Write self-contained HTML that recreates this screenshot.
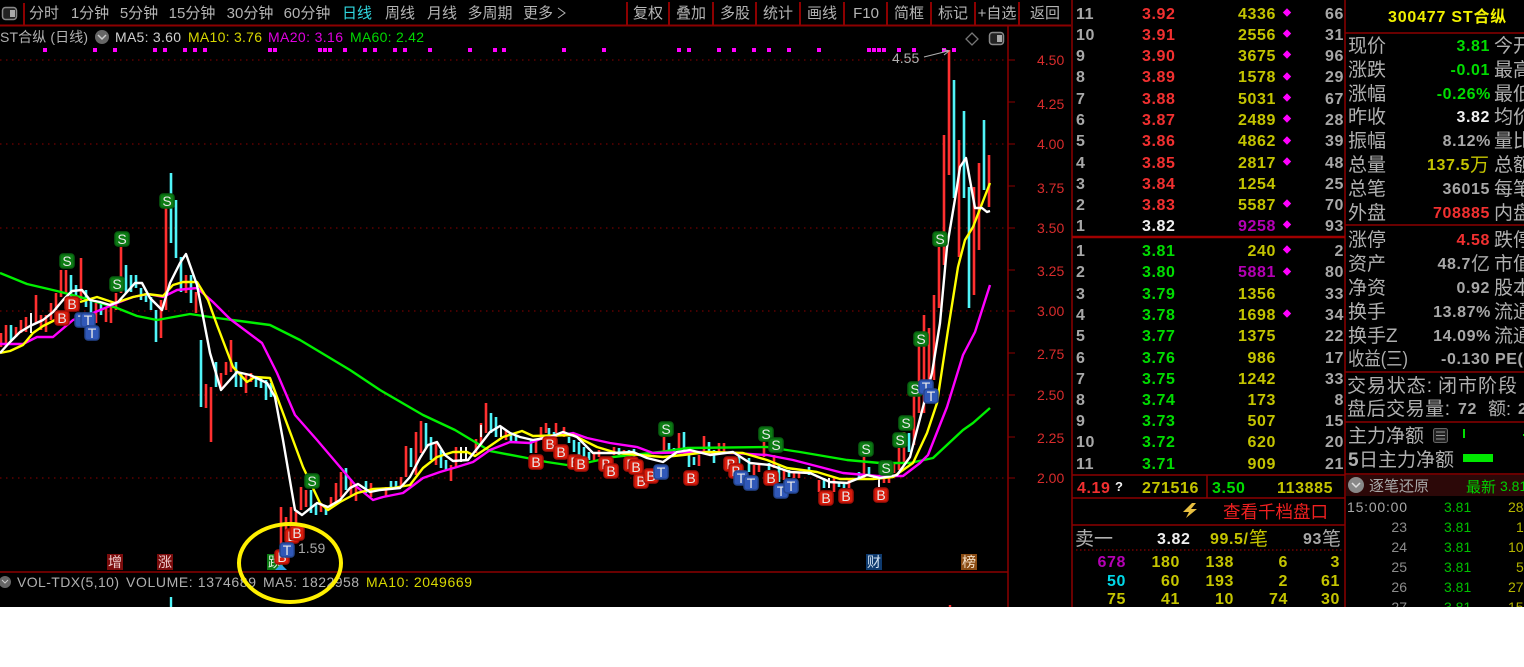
<!DOCTYPE html>
<html lang="zh"><head><meta charset="utf-8"><title>ST合纵</title>
<style>
html,body{margin:0;padding:0;background:#fff;width:1524px;height:667px;overflow:hidden}
svg{display:block;position:absolute;left:0;top:0;background:#000}
text{font-family:"Liberation Sans","Noto Sans CJK SC",sans-serif}
.tb{font-size:15px;fill:#b4b4b4;text-anchor:middle}
.h{font-size:14px}
.ax{font-size:14px;fill:#d82c2c}
.ob{font-size:16px;font-weight:bold;letter-spacing:.6px}
.e{text-anchor:end}
.g{fill:#a8a8a8}.r{fill:#f23030}.y{fill:#c4c400}.m{fill:#b400b4}.v{fill:#00dc00}.w{fill:#f0f0f0}.c{fill:#00d8e8}
.l{font-size:19px;fill:#b0b0b0}
.mk{font-size:14px;fill:#e8e8e8;text-anchor:middle}
.rb{fill:#d81c0c;stroke:#a81008}.sb{fill:#0c7c14;stroke:#086010}.tt{fill:#3058b8;stroke:#244690}
.t{font-size:14px}
</style></head><body>
<svg width="1524" height="607" viewBox="0 0 1524 607" xmlns="http://www.w3.org/2000/svg">
<!-- frame -->
<g stroke="#8c0000" fill="none">
<path stroke-width="2" d="M0 25.5H1071M24 3V25M627 2V25M669 2V25M713 2V25M756 2V25M800 2V25M844 2V25M887 2V25M931 2V25M975 2V25M1019 2V25"/>
<path stroke-width="1.5" d="M1008 25V607M1072 0V607M1345 0V607M0 572H1008"/>
<path stroke-width="2.5" stroke="#a00000" d="M1072 237H1345"/>
<path stroke-width="1.5" d="M1072 475H1345M1072 498H1345M1072 525H1345M1207 475V498M1345 33H1524M1345 225H1524M1345 372H1524M1345 422H1524M1345 474H1524"/>
<path d="M1008 60H1015M1008 102H1015M1008 144H1015M1008 186H1015M1008 228H1015M1008 270H1015M1008 311H1015M1008 353H1015M1008 395H1015M1008 437H1015M1008 478H1015"/>
<path stroke-dasharray="1.5 4.5" d="M0 60H1008M0 144H1008M0 228H1008M0 311H1008M0 395H1008M0 478H1008"/>
<path stroke="#b00000" stroke-dasharray="1.5 2.5" d="M1076 550H1342"/>
</g>
<!-- toolbar -->
<rect x="2.5" y="7.5" width="14" height="12" rx="3" fill="#222" stroke="#888" stroke-width="1.5"/><rect x="10" y="10" width="5" height="7" fill="#aaa"/>
<g class="tb">
<text x="44" y="18">分时</text><text x="90" y="18">1分钟</text><text x="139" y="18">5分钟</text><text x="192" y="18">15分钟</text><text x="250" y="18">30分钟</text><text x="307" y="18">60分钟</text>
<text x="357" y="18" style="fill:#30d8e0">日线</text><text x="400" y="18">周线</text><text x="442" y="18">月线</text><text x="490" y="18">多周期</text><text x="538" y="18">更多</text>
<text x="648" y="18">复权</text><text x="691" y="18">叠加</text><text x="735" y="18">多股</text><text x="778" y="18">统计</text><text x="822" y="18">画线</text><text x="866" y="18">F10</text><text x="909" y="18">简框</text><text x="953" y="18">标记</text><text x="997" y="18">+自选</text><text x="1045" y="18">返回</text>
</g>
<path d="M558 8L565 13L558 18" stroke="#b4b4b4" fill="none"/>
<!-- header -->
<text x="0" y="42" class="h" fill="#b0b0b0" textLength="88">ST合纵 (日线)</text>
<circle cx="102" cy="37" r="7" fill="#666"/><path d="M98 35L102 39L106 35" stroke="#ccc" stroke-width="1.5" fill="none"/>
<text x="115" y="42" class="h" fill="#d0d0d0" textLength="66">MA5: 3.60</text>
<text x="188" y="42" class="h" fill="#d8d800" textLength="74">MA10: 3.76</text>
<text x="268" y="42" class="h" fill="#e000e0" textLength="75">MA20: 3.16</text>
<text x="350" y="42" class="h" fill="#00d800" textLength="74">MA60: 2.42</text>
<path d="M972 33L978 39L972 45L966 39Z" fill="none" stroke="#777" stroke-width="1.3"/>
<rect x="989.5" y="32.5" width="14" height="12" rx="3" fill="#222" stroke="#888" stroke-width="1.5"/><rect x="997" y="35" width="5" height="7" fill="#aaa"/>
<path stroke="#ff00ff" stroke-width="4" fill="none" d="M43 50h4M93 50h4M113 50h4M153 50h4M163 50h4M183 50h4M193 50h4M203 50h4M268 50h4M273 50h4M318 50h4M323 50h4M328 50h4M343 50h4M363 50h4M373 50h4M393 50h4M403 50h4M428 50h4M468 50h4M493 50h4M502 50h4M562 50h4M602 50h4M677 50h4M687 50h4M717 50h4M732 50h4M752 50h4M767 50h4M787 50h4M817 50h4M867 50h4M872 50h4M877 50h4M882 50h4M897 50h4M912 50h4M942 50h4M952 50h4"/>
<!-- axis -->
<g class="ax"><text x="1037" y="65">4.50</text><text x="1037" y="109">4.25</text><text x="1037" y="149">4.00</text><text x="1037" y="193">3.75</text><text x="1037" y="233">3.50</text><text x="1037" y="276">3.25</text><text x="1037" y="316">3.00</text><text x="1037" y="359">2.75</text><text x="1037" y="400">2.50</text><text x="1037" y="443">2.25</text><text x="1037" y="483">2.00</text></g>
<!-- candles -->
<path stroke="#ff3030" stroke-width="2.6" fill="none" d="M1 333V347M6 325V347M16 327V337M21 320V333M26 317V332M36 295V323M41 315V330M46 315V332M51 303V320M56 293V310M61 270V297M66 270V293M81 258V300M96 303V323M106 307V322M111 303V323M116 293V310M121 247V293M161 300V338M166 207V310M186 275V293M196 292V313M206 384V408M211 387V442M221 373V388M226 362V375M231 340V372M246 375V393M251 373V382M281 507V547M286 517V540M291 507V530M296 512V527M301 487V510M306 490V507M321 503V512M331 497V507M336 483V503M341 472V497M351 480V497M356 487V501M371 483V497M386 487V497M401 477V487M406 446V477M416 432V475M421 421V453M436 442V465M451 465V481M456 447V468M476 439V453M481 423V445M486 403V433M506 430V440M536 440V453M541 427V440M546 423V433M556 423V433M564 427V437M594 452V460M599 450V457M614 447V455M624 450V457M664 437V452M679 433V450M699 455V466M704 436V453M719 443V453M724 443V453M754 465V475M759 465V472M764 442V457M774 455V468M784 470V480M794 472V478M799 472V478M819 480V492M834 478V492M849 480V488M864 457V478M884 477V483M889 477V483M894 463V473M899 448V470M904 432V463M914 393V445M919 335V413M924 315V413M929 328V387M934 295V380M939 247V308M944 135V265M949 50V175M959 140V257M974 187V295M979 163V250M989 155V207"/>
<path stroke="#50f4f8" stroke-width="2.6" fill="none" d="M11 325V340M71 275V300M76 285V307M86 290V307M91 300V313M101 303V315M126 265V293M131 275V292M136 275V288M141 288V300M146 293V302M151 297V310M156 310V342M171 173V243M176 200V258M181 257V292M191 275V303M201 340V407M216 362V387M236 362V387M241 372V387M256 377V387M261 377V388M266 380V400M271 383V397M311 490V513M316 503V515M326 507V515M346 468V490M366 481V493M391 481V488M396 481V488M411 448V467M426 423V448M431 437V460M441 450V468M446 460V471M491 413V433M496 417V437M511 433V442M516 435V442M531 440V453M549 428V435M554 432V437M569 437V443M574 440V452M579 442V455M584 447V457M589 452V460M619 448V455M629 450V457M634 449V458M669 443V453M674 448V455M684 432V450M689 450V467M694 457V465M709 442V455M714 450V463M739 455V465M749 458V472M769 463V470M779 465V482M789 470V477M809 467V475M824 478V488M839 482V487M844 482V488M859 472V478M869 467V475M909 433V452M954 80V198M964 111V198M969 187V308M984 120V190"/>
<path stroke="#f4f4f4" stroke-width="2" fill="none" d="M31 313V333M461 447V462M466 447V460M481 425V437M501 426V437M829 478V488M879 478V487M874 475V480"/>
<!-- MAs -->
<g fill="none" stroke-width="2.4" stroke-linejoin="round">
<path stroke="#00f000" d="M0 273L27 284L57 291L80 297L117 308L137 316L157 320L190 314L217 318L240 321L270 325L300 340L350 370L380 390L423 415L455 430L490 451L527 458L547 462L567 465L590 462L613 457L660 452L687 448L767 447L800 452L847 460L880 463L910 463L933 458L963 430L973 423L990 408"/>
<path stroke="#ff00ff" d="M0 344L23 344L37 337L53 337L73 320L93 313L117 303L133 297L148 294L163 297L177 290L197 288L213 302L230 319L262 343L277 373L295 415L317 440L340 467L357 487L373 500L383 497L403 493L423 478L440 472L457 467L473 462L490 450L510 442L530 443L543 438L573 433L587 438L610 443L637 447L653 453L700 452L733 453L767 455L793 460L820 467L843 473L877 476L903 476L920 463L928 455L947 407L963 355L975 332L990 285"/>
<path stroke="#ffff00" d="M0 353L10 351L23 345L33 333L43 326L55 320M80 302L97 297L115 303L133 297L147 294L163 296L173 285L183 282L197 282L208 300L217 325L233 367L247 382L255 377L270 378L283 413L303 467L320 503L328 510L340 502L357 493L373 489L393 488L410 485L423 468L437 457L453 452L467 452L475 456L487 448L503 437L522 431L533 436L573 435L597 447L617 453L640 455L663 457L683 455L707 452L743 453L767 460L787 468L817 472L840 479L873 479L893 477L913 463L927 433L937 403L948 330L958 267L965 240L973 227L990 183"/>
<path stroke="#ffffff" d="M0 353L10 342L20 332L30 326L43 320L53 312L63 300L72 291L82 290L90 300L100 302L110 305L118 302L127 292L135 283L142 283L150 298L162 310L170 283L180 263L186 254L197 285L210 353L221 390L237 372L250 375L267 383L275 397L283 440L295 510L302 515L317 503L328 507L340 500L350 488L358 484L370 492L380 490L400 488L410 477L420 458L428 445L437 442L445 455L453 461L468 460L480 445L490 432L500 426L510 433L520 437L533 440L550 437L563 432L577 437L593 453L613 453L633 452L647 458L663 462L677 452L690 450L710 455L733 452L750 463L770 465L790 472L810 473L830 482L847 483L867 475L880 478L897 475L910 457L923 407L932 373L940 323L947 247L957 187L960 167L966 158L975 208L982 208L987 212L990 211"/>
</g>
<!-- price notes -->
<text x="892" y="63" font-size="14" fill="#b0b0b0">4.55</text><path d="M924 57L948 51M942 49L949 51L944 55" stroke="#b0b0b0" fill="none"/>
<text x="298" y="553" font-size="14" fill="#a8a8a8">1.59</text>
<!-- bottom badges -->
<rect x="107" y="554" width="16" height="16" fill="#7a0c0c"/><text x="115" y="567" font-size="14" fill="#f0d0d0" text-anchor="middle">增</text>
<rect x="157" y="554" width="16" height="16" fill="#7a0c0c"/><text x="165" y="567" font-size="14" fill="#f0d0d0" text-anchor="middle">涨</text>
<rect x="866" y="554" width="16" height="16" fill="#0e3a6e"/><text x="874" y="567" font-size="14" fill="#d0e0f0" text-anchor="middle">财</text>
<rect x="961" y="554" width="16" height="16" fill="#8a4c14"/><text x="969" y="567" font-size="14" fill="#f4e0c8" text-anchor="middle">榜</text>
<rect x="267" y="554" width="16" height="16" fill="#0c7c14"/><text x="275" y="567" font-size="14" fill="#e0f0e0" text-anchor="middle">跌</text>
<path d="M275 570L281 564L287 570Z" fill="#30a0e0"/>
<!-- markers -->
<g stroke-width="1.5">
<rect class="rb" x="55" y="311" width="14" height="14" rx="3"/><text class="mk" x="62" y="323">B</text>
<rect class="rb" x="65" y="297" width="14" height="14" rx="3"/><text class="mk" x="72" y="309">B</text>
<rect class="tt" x="75" y="313" width="14" height="14" rx="3"/><text class="mk" x="82" y="325">T</text>
<rect class="tt" x="81" y="313" width="14" height="14" rx="3"/><text class="mk" x="88" y="325">T</text>
<rect class="tt" x="85" y="326" width="14" height="14" rx="3"/><text class="mk" x="92" y="338">T</text>
<rect class="sb" x="60" y="254" width="14" height="14" rx="3"/><text class="mk" x="67" y="266">S</text>
<rect class="sb" x="115" y="232" width="14" height="14" rx="3"/><text class="mk" x="122" y="244">S</text>
<rect class="sb" x="110" y="277" width="14" height="14" rx="3"/><text class="mk" x="117" y="289">S</text>
<rect class="sb" x="160" y="194" width="14" height="14" rx="3"/><text class="mk" x="167" y="206">S</text>
<rect class="sb" x="305" y="474" width="14" height="14" rx="3"/><text class="mk" x="312" y="486">S</text>
<rect class="rb" x="275" y="550" width="14" height="14" rx="3"/><text class="mk" x="282" y="562">B</text>
<rect class="rb" x="285" y="529" width="14" height="14" rx="3"/><text class="mk" x="292" y="541">B</text>
<rect class="rb" x="290" y="526" width="14" height="14" rx="3"/><text class="mk" x="297" y="538">B</text>
<rect class="tt" x="280" y="543" width="14" height="14" rx="3"/><text class="mk" x="287" y="555">T</text>
<rect class="rb" x="529" y="455" width="14" height="14" rx="3"/><text class="mk" x="536" y="467">B</text>
<rect class="rb" x="543" y="437" width="14" height="14" rx="3"/><text class="mk" x="550" y="449">B</text>
<rect class="rb" x="554" y="445" width="14" height="14" rx="3"/><text class="mk" x="561" y="457">B</text>
<rect class="rb" x="568" y="455" width="14" height="14" rx="3"/><text class="mk" x="575" y="467">B</text>
<rect class="rb" x="574" y="457" width="14" height="14" rx="3"/><text class="mk" x="581" y="469">B</text>
<rect class="rb" x="599" y="457" width="14" height="14" rx="3"/><text class="mk" x="606" y="469">B</text>
<rect class="rb" x="604" y="464" width="14" height="14" rx="3"/><text class="mk" x="611" y="476">B</text>
<rect class="rb" x="624" y="457" width="14" height="14" rx="3"/><text class="mk" x="631" y="469">B</text>
<rect class="rb" x="629" y="460" width="14" height="14" rx="3"/><text class="mk" x="636" y="472">B</text>
<rect class="rb" x="634" y="474" width="14" height="14" rx="3"/><text class="mk" x="641" y="486">B</text>
<rect class="rb" x="644" y="469" width="14" height="14" rx="3"/><text class="mk" x="651" y="481">B</text>
<rect class="tt" x="654" y="465" width="14" height="14" rx="3"/><text class="mk" x="661" y="477">T</text>
<rect class="rb" x="684" y="471" width="14" height="14" rx="3"/><text class="mk" x="691" y="483">B</text>
<rect class="rb" x="724" y="457" width="14" height="14" rx="3"/><text class="mk" x="731" y="469">B</text>
<rect class="rb" x="729" y="464" width="14" height="14" rx="3"/><text class="mk" x="736" y="476">B</text>
<rect class="tt" x="734" y="471" width="14" height="14" rx="3"/><text class="mk" x="741" y="483">T</text>
<rect class="tt" x="744" y="476" width="14" height="14" rx="3"/><text class="mk" x="751" y="488">T</text>
<rect class="rb" x="764" y="471" width="14" height="14" rx="3"/><text class="mk" x="771" y="483">B</text>
<rect class="tt" x="774" y="484" width="14" height="14" rx="3"/><text class="mk" x="781" y="496">T</text>
<rect class="tt" x="784" y="479" width="14" height="14" rx="3"/><text class="mk" x="791" y="491">T</text>
<rect class="rb" x="819" y="491" width="14" height="14" rx="3"/><text class="mk" x="826" y="503">B</text>
<rect class="rb" x="839" y="489" width="14" height="14" rx="3"/><text class="mk" x="846" y="501">B</text>
<rect class="rb" x="874" y="488" width="14" height="14" rx="3"/><text class="mk" x="881" y="500">B</text>
<rect class="sb" x="659" y="422" width="14" height="14" rx="3"/><text class="mk" x="666" y="434">S</text>
<rect class="sb" x="759" y="427" width="14" height="14" rx="3"/><text class="mk" x="766" y="439">S</text>
<rect class="sb" x="769" y="438" width="14" height="14" rx="3"/><text class="mk" x="776" y="450">S</text>
<rect class="sb" x="859" y="442" width="14" height="14" rx="3"/><text class="mk" x="866" y="454">S</text>
<rect class="sb" x="879" y="461" width="14" height="14" rx="3"/><text class="mk" x="886" y="473">S</text>
<rect class="sb" x="893" y="433" width="14" height="14" rx="3"/><text class="mk" x="900" y="445">S</text>
<rect class="sb" x="899" y="416" width="14" height="14" rx="3"/><text class="mk" x="906" y="428">S</text>
<rect class="sb" x="914" y="332" width="14" height="14" rx="3"/><text class="mk" x="921" y="344">S</text>
<rect class="sb" x="908" y="382" width="14" height="14" rx="3"/><text class="mk" x="915" y="394">S</text>
<rect class="sb" x="933" y="232" width="14" height="14" rx="3"/><text class="mk" x="940" y="244">S</text>
<rect class="tt" x="919" y="380" width="14" height="14" rx="3"/><text class="mk" x="926" y="392">T</text>
<rect class="tt" x="924" y="389" width="14" height="14" rx="3"/><text class="mk" x="931" y="401">T</text>
</g>
<!-- volume -->
<circle cx="5" cy="582" r="6" fill="#666"/><path d="M2 580L5 583L8 580" stroke="#ccc" fill="none"/>
<text x="17" y="587" class="h" fill="#b0b0b0" textLength="102">VOL-TDX(5,10)</text>
<text x="126" y="587" class="h" fill="#b0b0b0" textLength="130">VOLUME: 1374689</text>
<text x="263" y="587" class="h" fill="#b0b0b0" textLength="96">MA5: 1822958</text>
<text x="366" y="587" class="h" fill="#d8d800" textLength="106">MA10: 2049669</text>
<path d="M171 597V607" stroke="#50f4f8" stroke-width="2.4"/><path d="M950 605V607" stroke="#ff3030" stroke-width="2.4"/>
<ellipse cx="290" cy="563" rx="51" ry="39" fill="none" stroke="#fff000" stroke-width="4"/>
<!-- order book -->
<g class="ob">
<g class="g"><text x="1076" y="19">11</text><text x="1076" y="40">10</text><text x="1076" y="61">9</text><text x="1076" y="82">8</text><text x="1076" y="104">7</text><text x="1076" y="125">6</text><text x="1076" y="146">5</text><text x="1076" y="168">4</text><text x="1076" y="189">3</text><text x="1076" y="210">2</text><text x="1076" y="231">1</text><text x="1076" y="256">1</text><text x="1076" y="277">2</text><text x="1076" y="299">3</text><text x="1076" y="320">4</text><text x="1076" y="341">5</text><text x="1076" y="363">6</text><text x="1076" y="384">7</text><text x="1076" y="405">8</text><text x="1076" y="426">9</text><text x="1076" y="447">10</text><text x="1076" y="469">11</text></g>
<g class="r"><text x="1142" y="19">3.92</text><text x="1142" y="40">3.91</text><text x="1142" y="61">3.90</text><text x="1142" y="82">3.89</text><text x="1142" y="104">3.88</text><text x="1142" y="125">3.87</text><text x="1142" y="146">3.86</text><text x="1142" y="168">3.85</text><text x="1142" y="189">3.84</text><text x="1142" y="210">3.83</text></g>
<text x="1142" y="231" class="w">3.82</text>
<g class="v"><text x="1142" y="256">3.81</text><text x="1142" y="277">3.80</text><text x="1142" y="299">3.79</text><text x="1142" y="320">3.78</text><text x="1142" y="341">3.77</text><text x="1142" y="363">3.76</text><text x="1142" y="384">3.75</text><text x="1142" y="405">3.74</text><text x="1142" y="426">3.73</text><text x="1142" y="447">3.72</text><text x="1142" y="469">3.71</text></g>
<g class="y e"><text x="1276" y="19">4336</text><text x="1276" y="40">2556</text><text x="1276" y="61">3675</text><text x="1276" y="82">1578</text><text x="1276" y="104">5031</text><text x="1276" y="125">2489</text><text x="1276" y="146">4862</text><text x="1276" y="168">2817</text><text x="1276" y="189">1254</text><text x="1276" y="210">5587</text><text x="1276" y="256">240</text><text x="1276" y="299">1356</text><text x="1276" y="320">1698</text><text x="1276" y="341">1375</text><text x="1276" y="363">986</text><text x="1276" y="384">1242</text><text x="1276" y="405">173</text><text x="1276" y="426">507</text><text x="1276" y="447">620</text><text x="1276" y="469">909</text></g>
<text x="1276" y="231" class="m e">9258</text><text x="1276" y="277" class="m e">5881</text>
<g class="g e"><text x="1344" y="19">66</text><text x="1344" y="40">31</text><text x="1344" y="61">96</text><text x="1344" y="82">29</text><text x="1344" y="104">67</text><text x="1344" y="125">28</text><text x="1344" y="146">39</text><text x="1344" y="168">48</text><text x="1344" y="189">25</text><text x="1344" y="210">70</text><text x="1344" y="231">93</text><text x="1344" y="256">2</text><text x="1344" y="277">80</text><text x="1344" y="299">33</text><text x="1344" y="320">34</text><text x="1344" y="341">22</text><text x="1344" y="363">17</text><text x="1344" y="384">33</text><text x="1344" y="405">8</text><text x="1344" y="426">15</text><text x="1344" y="447">20</text><text x="1344" y="469">21</text></g>
</g>
<path fill="#ff00ff" stroke="#ff00ff" d="M1287 9l3.500 3.500l-3.500 3.500l-3.500-3.500zM1287 30l3.500 3.500l-3.500 3.500l-3.500-3.500zM1287 51l3.500 3.500l-3.500 3.500l-3.500-3.500zM1287 73l3.500 3.500l-3.500 3.500l-3.500-3.500zM1287 94l3.500 3.500l-3.500 3.500l-3.500-3.500zM1287 115l3.500 3.500l-3.500 3.500l-3.500-3.500zM1287 137l3.500 3.500l-3.500 3.500l-3.500-3.500zM1287 158l3.500 3.500l-3.500 3.500l-3.500-3.500zM1287 200l3.500 3.500l-3.500 3.500l-3.500-3.500zM1287 221l3.500 3.500l-3.500 3.500l-3.500-3.500zM1287 246l3.500 3.500l-3.500 3.500l-3.500-3.500zM1287 268l3.500 3.500l-3.500 3.500l-3.500-3.500zM1287 310l3.500 3.500l-3.500 3.500l-3.500-3.500z"/>
<!-- summary rows -->
<g class="ob">
<text x="1077" y="493" class="r">4.19</text><text x="1115" y="491" class="w" style="font-size:13px">?</text><text x="1142" y="493" class="y">271516</text>
<text x="1212" y="493" class="v">3.50</text><text x="1277" y="493" class="y">113885</text>
</g>
<path d="M1192 503L1183 512H1189L1186 518L1197 509H1191L1196 503Z" fill="#e8c040"/>
<text x="1223" y="518" font-size="17.500" fill="#f02020">查看千档盘口</text>
<text x="1075" y="545" font-size="19" fill="#b0b0b0">卖一</text>
<text x="1157" y="544" class="ob w">3.82</text>
<text x="1210" y="544" class="ob y">99.5/</text><text x="1249" y="545" font-size="19" class="y">笔</text>
<text x="1303" y="544" class="ob g">93</text><text x="1322" y="545" font-size="19" class="g">笔</text>
<g class="ob e">
<text x="1126" y="567" class="m e">678</text><text x="1126" y="586" class="c e">50</text><text x="1126" y="604" class="y e">75</text>
<g class="y e"><text x="1180" y="567">180</text><text x="1180" y="586">60</text><text x="1180" y="604">41</text><text x="1234" y="567">138</text><text x="1234" y="586">193</text><text x="1234" y="604">10</text><text x="1288" y="567">6</text><text x="1288" y="586">2</text><text x="1288" y="604">74</text><text x="1340" y="567">3</text><text x="1340" y="586">61</text><text x="1340" y="604">30</text></g>
</g>
<!-- right panel -->
<text x="1388" y="22" font-size="16" font-weight="bold" fill="#f0f000" letter-spacing="0.800">300477 ST合纵</text>
<g class="l">
<text x="1348" y="52">现价</text><text x="1348" y="76">涨跌</text><text x="1348" y="100">涨幅</text><text x="1348" y="123">昨收</text><text x="1348" y="147">振幅</text><text x="1348" y="171">总量</text><text x="1348" y="195">总笔</text><text x="1348" y="219">外盘</text>
<text x="1348" y="246">涨停</text><text x="1348" y="270">资产</text><text x="1348" y="294">净资</text><text x="1348" y="318">换手</text><text x="1348" y="342">换手Z</text><text x="1348" y="365" textLength="60" lengthAdjust="spacingAndGlyphs">收益(三)</text>
<text x="1494" y="52">今开</text><text x="1494" y="76">最高</text><text x="1494" y="100">最低</text><text x="1494" y="123">均价</text><text x="1494" y="147">量比</text><text x="1494" y="171">总额</text><text x="1494" y="195">每笔</text><text x="1494" y="219">内盘</text>
<text x="1494" y="246">跌停</text><text x="1494" y="270">市值</text><text x="1494" y="294">股本</text><text x="1494" y="318">流通</text><text x="1494" y="342">流通</text>
</g>
<g class="ob">
<text x="1490" y="51" class="e v">3.81</text><text x="1490" y="75" class="e v">-0.01</text><text x="1491" y="99" class="e v">-0.26%</text><text x="1490" y="122" class="e w">3.82</text><text x="1491" y="146" class="e g">8.12%</text><text x="1470" y="170" class="e y">137.5</text><text x="1490" y="194" class="e g">36015</text><text x="1490" y="218" class="e r">708885</text>
<text x="1490" y="245" class="e r">4.58</text><text x="1471" y="269" class="e g">48.7</text><text x="1490" y="293" class="e g">0.92</text><text x="1491" y="317" class="e g">13.87%</text><text x="1491" y="341" class="e g">14.09%</text><text x="1490" y="364" class="e g">-0.130</text><text x="1495" y="364" class="g">PE(动)</text>
</g>
<text x="1470" y="171" font-size="19" class="y">万</text><text x="1471" y="270" font-size="19" class="g">亿</text>
<text x="1347" y="392" font-size="19" fill="#b0b0b0" textLength="85">交易状态:</text><text x="1438" y="392" font-size="19" fill="#b0b0b0" textLength="79">闭市阶段</text>
<text x="1347" y="415" font-size="19" fill="#b0b0b0" textLength="103">盘后交易量:</text><text x="1458" y="414" class="ob g">72</text><text x="1488" y="415" font-size="18" fill="#b0b0b0">额:</text><text x="1518" y="414" class="ob g">2</text>
<text x="1348" y="442" class="l">主力净额</text>
<rect x="1433.500" y="428.500" width="14" height="14" rx="2" fill="#222" stroke="#666"/><path d="M1436 432H1445M1436 435.500H1445M1436 439H1445" stroke="#999"/>
<rect x="1463" y="429" width="2" height="9" fill="#00e000"/><rect x="1523" y="434" width="1" height="2" fill="#00e000"/>
<text x="1348" y="466" class="l" font-weight="bold">5</text><text x="1359" y="466" class="l">日主力净额</text>
<rect x="1463" y="454" width="30" height="8" fill="#00e800"/>
<rect x="1346" y="475" width="178" height="21" fill="#2c0808"/>
<circle cx="1356" cy="485" r="8" fill="#888"/><path d="M1352 483L1356 487L1360 483" stroke="#e0e0e0" stroke-width="1.500" fill="none"/>
<text x="1369" y="491" font-size="15" fill="#a8a8a8">逐笔还原</text>
<text x="1466" y="492" font-size="15" fill="#00d000">最新</text><text x="1500" y="491" font-size="14" fill="#00d000">3.81</text>
<g class="t">
<text x="1347" y="512" fill="#a8a8a8" textLength="60">15:00:00</text>
<g fill="#8c8c8c" text-anchor="end"><text x="1407" y="532">23</text><text x="1407" y="552">24</text><text x="1407" y="572">25</text><text x="1407" y="592">26</text><text x="1407" y="612">27</text></g>
<g fill="#00c000"><text x="1444" y="512">3.81</text><text x="1444" y="532">3.81</text><text x="1444" y="552">3.81</text><text x="1444" y="572">3.81</text><text x="1444" y="592">3.81</text><text x="1444" y="612">3.81</text></g>
<g fill="#b4b400"><text x="1508" y="512">28</text><text x="1516" y="532">1</text><text x="1508" y="552">10</text><text x="1516" y="572">5</text><text x="1508" y="592">27</text><text x="1508" y="612">15</text></g>
</g>
</svg>
</body></html>
